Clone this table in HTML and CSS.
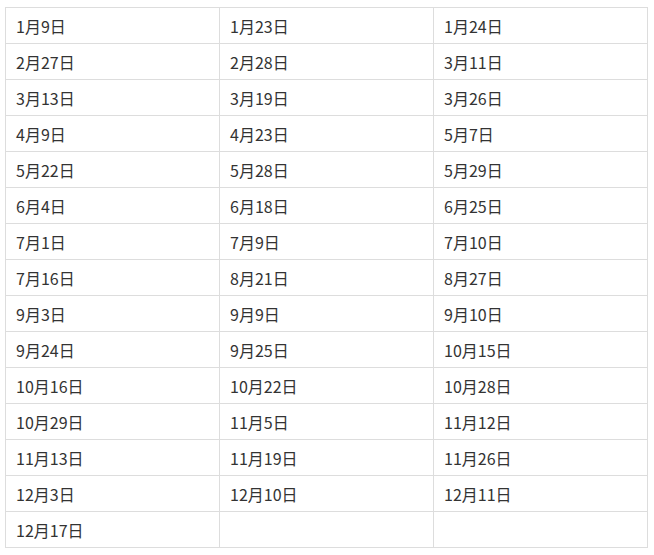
FILE: index.html
```html
<!DOCTYPE html>
<html lang="zh">
<head>
<meta charset="utf-8">
<link rel="stylesheet" href="styles.css">
</head>
<body>
<table class="dates">
<tr><td>1月9日</td><td>1月23日</td><td>1月24日</td></tr>
<tr><td>2月27日</td><td>2月28日</td><td>3月11日</td></tr>
<tr><td>3月13日</td><td>3月19日</td><td>3月26日</td></tr>
<tr><td>4月9日</td><td>4月23日</td><td>5月7日</td></tr>
<tr><td>5月22日</td><td>5月28日</td><td>5月29日</td></tr>
<tr><td>6月4日</td><td>6月18日</td><td>6月25日</td></tr>
<tr><td>7月1日</td><td>7月9日</td><td>7月10日</td></tr>
<tr><td>7月16日</td><td>8月21日</td><td>8月27日</td></tr>
<tr><td>9月3日</td><td>9月9日</td><td>9月10日</td></tr>
<tr><td>9月24日</td><td>9月25日</td><td>10月15日</td></tr>
<tr><td>10月16日</td><td>10月22日</td><td>10月28日</td></tr>
<tr><td>10月29日</td><td>11月5日</td><td>11月12日</td></tr>
<tr><td>11月13日</td><td>11月19日</td><td>11月26日</td></tr>
<tr><td>12月3日</td><td>12月10日</td><td>12月11日</td></tr>
<tr><td>12月17日</td><td></td><td></td></tr>
</table>
</body>
</html>
```
FILE: styles.css
```css
html, body {
  background: #ffffff;
}
body {
  margin: 7px 5px;
  font-family: "Noto Sans CJK SC", "Noto Sans", sans-serif;
  font-size: 16px;
  color: #333333;
}
.dates {
  border-collapse: collapse;
  width: 643px;
  table-layout: fixed;
}
.dates td {
  border: 1px solid #dddddd;
  height: 36px;
  padding: 0 10px;
  line-height: 20px;
  vertical-align: middle;
  box-sizing: border-box;
}
```
